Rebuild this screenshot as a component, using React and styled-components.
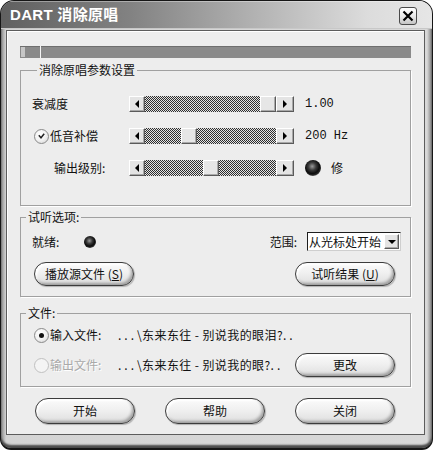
import React from 'react'
import styled, { createGlobalStyle } from 'styled-components'

const GlobalStyle = createGlobalStyle`
    html, body {
        margin: 0;
        padding: 0;
        background: #ffffff;
    }
    body {
        font-family: "Noto Sans CJK SC", "Liberation Sans", sans-serif;
        font-size: 12px;
        line-height: 14px;
        color: #111;
    }
`

const Window = styled.div`
    width: 433px;
    height: 450px;
    box-sizing: border-box;
    display: flex;
    flex-direction: column;
    border: 1px solid #161616;
    border-bottom-width: 2px;
    border-radius: 14px 14px 11px 11px;
    background: linear-gradient(90deg, #8c8c8c 0, #d4d4d4 5px, #d8d8d8 calc(100% - 5px), #7c7c7c 100%);
    box-shadow: inset 0 -3px 2px #4a4a4a;
    overflow: hidden;
`

const TitleBar = styled.div`
    height: 28px;
    flex: none;
    display: flex;
    align-items: center;
    justify-content: space-between;
    padding: 0 15px 0 9px;
    background: linear-gradient(90deg, #606060 0%, #828282 30%, #b4b4b4 60%, #dcdcdc 85%, #e6e6e6 100%);
    box-shadow: inset 0 1px 0 rgba(255, 255, 255, 0.35), inset 0 -1px 0 #c8c8c8;
`

const Title = styled.span`
    color: #fff;
    font-family: "Liberation Sans", "Noto Sans CJK SC", sans-serif;
    font-weight: bold;
    font-size: 15px;
    letter-spacing: 0.3px;
`

const CloseButton = styled.div`
    width: 16px;
    height: 16px;
    border: 1px solid #4a4a4a;
    border-radius: 3px;
    background: linear-gradient(180deg, #ffffff 0%, #e6e6e6 55%, #c4c4c4 100%);
    display: flex;
    align-items: center;
    justify-content: center;
    margin-top: 2px;
`

const Body = styled.div`
    flex: 1;
    margin: 1px 7px 14px 5px;
    border: 1px solid #5c5c5c;
    box-shadow: inset 1px 1px 0 #ffffff;
    background: #ededed;
    padding: 15px 13px 10px 13px;
    display: flex;
    flex-direction: column;
`

const Progress = styled.div`
    position: relative;
    height: 12px;
    background: #8a8a8a;
    box-shadow: inset 0 1px 0 #6e6e6e;
    display: flex;
    align-items: stretch;
    padding: 1px;
    box-sizing: border-box;
`

const ProgressChunk = styled.div`
    width: 4px;
    background: #c6c6c6;
`

const ProgressMarker = styled.div`
    position: absolute;
    top: 0;
    bottom: 0;
    left: 20px;
    width: 1px;
    background: #f4f4f4;
`

const Group = styled.fieldset`
    margin: ${p => p.$top}px 0 0 0;
    padding: ${p => p.$pad};
    border: 1px solid #a0a0a0;
    box-shadow: 1px 1px 0 #ffffff;
    min-width: 0;
`

const Legend = styled.legend`
    margin-left: 5px;
    padding: 0 2px;
    line-height: 14px;
    font-size: 12px;
`

const SliderGrid = styled.div`
    display: grid;
    grid-template-columns: 97px 165px 1fr;
    grid-auto-rows: 16px;
    row-gap: 16px;
    align-items: center;
`

const RowLabel = styled.div`
    display: flex;
    align-items: center;
    gap: 1px;
    padding-left: ${p => p.$indent || 0}px;
`

const Slider = styled.div`
    display: flex;
    height: 16px;
`

const ArrowBox = styled.div`
    width: ${p => p.$w}px;
    flex: none;
    box-sizing: border-box;
    background: #e4e4e4;
    border-top: 1px solid #ffffff;
    border-left: 1px solid #ffffff;
    border-right: 1px solid #5a5a5a;
    border-bottom: 1px solid #5a5a5a;
    box-shadow: inset -1px -1px 0 #a8a8a8;
    display: flex;
    align-items: center;
    justify-content: center;
`

const Track = styled.div`
    position: relative;
    flex: 1;
    background: repeating-conic-gradient(#2e2e2e 0 25%, #e4e4e4 0 50%) 0 0 / 2px 2px;
`

const Thumb = styled.div`
    position: absolute;
    top: 0;
    width: 16px;
    height: 16px;
    box-sizing: border-box;
    background: #e6e6e6;
    border-top: 1px solid #ffffff;
    border-left: 1px solid #ffffff;
    border-right: 1px solid #5a5a5a;
    border-bottom: 1px solid #5a5a5a;
    box-shadow: inset -1px -1px 0 #aaaaaa;
`

const Value = styled.div`
    margin-left: 11px;
    font-family: "Liberation Mono", monospace;
    font-size: 12px;
    display: flex;
    align-items: center;
    gap: 10px;
`

const ValueText = styled.span`
    font-family: "Noto Sans CJK SC", sans-serif;
`

const Led = styled.span`
    display: inline-block;
    width: ${p => p.$size}px;
    height: ${p => p.$size}px;
    border-radius: 50%;
    flex: none;
    background: radial-gradient(circle at 45% 40%, #9a9a9a 0, #3a3a3a 30%, #0c0c0c 55%, #2a2a2a 68%, #b4b4b4 80%, #6a6a6a 100%);
`

const Radio = styled.span`
    width: 15px;
    height: 15px;
    box-sizing: border-box;
    border-radius: 50%;
    flex: none;
    border: 1px solid ${p => (p.$disabled ? '#c0c0c0' : '#8a8a8a')};
    background: ${p => (p.$disabled ? '#f4f4f4' : 'radial-gradient(circle at 40% 35%, #ffffff 0, #f2f2f2 50%, #d0d0d0 100%)')};
    display: flex;
    align-items: center;
    justify-content: center;
`

const Dot = styled.span`
    width: 5px;
    height: 5px;
    border-radius: 50%;
    background: #111;
`

const Row = styled.div`
    display: flex;
    align-items: center;
    height: ${p => p.$h}px;
    padding: 0 ${p => p.$right || 0}px 0 ${p => p.$left || 0}px;
    margin-top: ${p => p.$top || 0}px;
`

const StatusLabel = styled.span`
    width: 52px;
`

const RangeBox = styled.div`
    margin-left: auto;
    display: flex;
    align-items: center;
    gap: 10px;
`

const Select = styled.div`
    width: 94px;
    height: 19px;
    box-sizing: border-box;
    border: 1px solid #1e1e1e;
    border-right-color: #cfcfcf;
    border-bottom-color: #cfcfcf;
    background: #fff;
    display: flex;
    align-items: center;
    justify-content: space-between;
    padding-left: 1px;
    font-size: 12px;
`

const SelectText = styled.span`
    white-space: nowrap;
`

const SelectArrow = styled(ArrowBox)`
    height: 15px;
    margin-right: 1px;
`

const PillButton = styled.div`
    width: 100px;
    height: ${p => p.$h || 24}px;
    box-sizing: border-box;
    flex: none;
    border: 1px solid #3c3c3c;
    border-radius: 13px;
    background: linear-gradient(180deg, #fbfbfb 0%, #f0f0f0 45%, #dedede 100%);
    box-shadow: inset -2px -2px 3px rgba(0, 0, 0, 0.3), inset 2px 2px 2px #ffffff, 1px 1px 1px rgba(0, 0, 0, 0.25);
    display: flex;
    align-items: center;
    justify-content: center;
    font-size: 12px;
    margin-left: ${p => (p.$push ? 'auto' : '0')};
`

const Key = styled.span`
    text-decoration: underline;
`

const FileLabel = styled.span`
    width: 68px;
    margin-left: 1px;
    color: ${p => (p.$disabled ? '#a9a9a9' : '#111')};
    text-shadow: ${p => (p.$disabled ? '1px 1px 0 #ffffff' : 'none')};
`

const Path = styled.span`
    white-space: nowrap;
    letter-spacing: 0.4px;
`

const Dots = styled.span`
    letter-spacing: 3px;
`

const Footer = styled.div`
    display: flex;
    gap: 30px;
    margin-top: 11px;
    padding-left: 15px;
`

const Tri = ({ dir }) => {
    const pts = {
        left: '5,0 5,8 1,4',
        right: '1,0 1,8 5,4',
        down: '0,2 8,2 4,6',
    }[dir]
    const size = dir === 'down' ? [8, 8] : [6, 8]
    return (
        <svg width={size[0]} height={size[1]} viewBox={`0 0 ${size[0]} ${size[1]}`}>
            <polygon points={pts} fill="#000" />
        </svg>
    )
}

function HSlider({ value }) {
    return (
        <Slider>
            <ArrowBox $w={16}><Tri dir="left" /></ArrowBox>
            <Track>
                <Thumb style={{ left: `calc(${value} * (100% - 16px))` }} />
            </Track>
            <ArrowBox $w={18}><Tri dir="right" /></ArrowBox>
        </Slider>
    )
}

const CheckMark = () => (
    <svg width="7" height="6" viewBox="0 0 7 6">
        <path d="M0.8 2.2 L3 4.8 L6.2 0.8" fill="none" stroke="#222" strokeWidth="1.5" />
    </svg>
)

function FilePath({ name }) {
    return (
        <Path>
            <Dots>...</Dots>\东来东往 - {name}?<Dots>..</Dots>
        </Path>
    )
}

export default function App() {
    const sliders = [
        { label: <RowLabel>衰减度</RowLabel>, value: 1, right: <Value>1.00</Value> },
        {
            label: (
                <RowLabel $indent={2}>
                    <Radio><CheckMark /></Radio>
                    <span>低音补偿</span>
                </RowLabel>
            ),
            value: 0.31,
            right: <Value>200 Hz</Value>,
        },
        {
            label: <RowLabel $indent={22}>输出级别:</RowLabel>,
            value: 0.5,
            right: (
                <Value>
                    <Led $size={16} />
                    <ValueText>修</ValueText>
                </Value>
            ),
        },
    ]

    return (
        <>
            <GlobalStyle />
            <Window>
                <TitleBar>
                    <Title>DART 消除原唱</Title>
                    <CloseButton>
                        <svg width="12" height="12" viewBox="0 0 12 12">
                            <path d="M1.5 1.5 L10.5 10.5 M10.5 1.5 L1.5 10.5" stroke="#000" strokeWidth="2.2" />
                        </svg>
                    </CloseButton>
                </TitleBar>
                <Body>
                    <Progress>
                        <ProgressChunk />
                        <ProgressMarker />
                    </Progress>

                    <Group $top={5} $pad="19px 0 29px 11px">
                        <Legend>消除原唱参数设置</Legend>
                        <SliderGrid>
                            {sliders.map((s, i) => (
                                <React.Fragment key={i}>
                                    {s.label}
                                    <HSlider value={s.value} />
                                    {s.right}
                                </React.Fragment>
                            ))}
                        </SliderGrid>
                    </Group>

                    <Group $top={4} $pad="8px 0 10px 0">
                        <Legend>试听选项:</Legend>
                        <Row $h={19} $left={11} $right={9}>
                            <StatusLabel>就绪:</StatusLabel>
                            <Led $size={12} />
                            <RangeBox>
                                <span>范围:</span>
                                <Select>
                                    <SelectText>从光标处开始</SelectText>
                                    <SelectArrow $w={15}><Tri dir="down" /></SelectArrow>
                                </Select>
                            </RangeBox>
                        </Row>
                        <Row $h={24} $left={13} $right={15} $top={11}>
                            <PillButton>播放源文件 (<Key>S</Key>)</PillButton>
                            <PillButton $push>试听结果 (<Key>U</Key>)</PillButton>
                        </Row>
                    </Group>

                    <Group $top={9} $pad="7px 0 9px 0">
                        <Legend>文件:</Legend>
                        <Row $h={16} $left={13}>
                            <Radio><Dot /></Radio>
                            <FileLabel>输入文件:</FileLabel>
                            <FilePath name="别说我的眼泪" />
                        </Row>
                        <Row $h={24} $left={13} $right={15} $top={10}>
                            <Radio $disabled />
                            <FileLabel $disabled>输出文件:</FileLabel>
                            <FilePath name="别说我的眼" />
                            <PillButton $push>更改</PillButton>
                        </Row>
                    </Group>

                    <Footer>
                        <PillButton $h={26}>开始</PillButton>
                        <PillButton $h={26}>帮助</PillButton>
                        <PillButton $h={26}>关闭</PillButton>
                    </Footer>
                </Body>
            </Window>
        </>
    )
}
